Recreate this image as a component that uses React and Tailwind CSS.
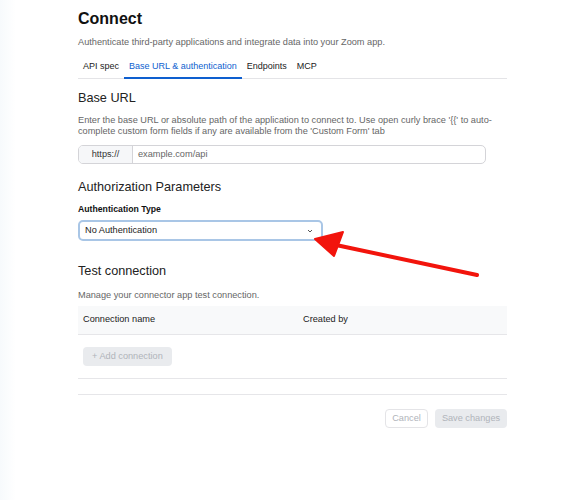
import React from 'react';

const font = { fontFamily: '"Liberation Sans", Arial, sans-serif' };

function Tabs() {
  const tabs = ['API spec', 'Base URL & authentication', 'Endpoints', 'MCP'];
  return (
    <div className="flex border-b border-[#e4e4e7] mt-[10px]">
      {tabs.map((t, i) => (
        <div
          key={t}
          className={`px-[5px] pb-[4px] text-[9px] ${i === 1 ? 'text-[#0e5fcf] border-b-2 border-[#0e5fcf] -mb-px' : 'text-[#222]'}`}
        >
          {t}
        </div>
      ))}
    </div>
  );
}

function Arrow() {
  return (
    <svg className="absolute left-0 top-0 pointer-events-none" width="573" height="500">
      <line x1="477" y1="275" x2="336" y2="245" stroke="#f2140c" strokeWidth="4" strokeLinecap="round" />
      <polygon points="315,239 343,232 334,256" fill="#f2140c" stroke="#f2140c" strokeWidth="2" strokeLinejoin="round" />
    </svg>
  );
}

export default function App() {
  return (
    <div className="relative w-[573px] h-[500px] bg-white overflow-hidden" style={font}>
      <div className="absolute left-0 top-0 w-[16px] h-full bg-gradient-to-r from-[#f7fafc] to-white" />
      <div className="ml-[78px] w-[429px] pt-[9px]">
        <h1 className="text-[16px] font-bold text-[#111] leading-[20px]">Connect</h1>
        <p className="text-[9.2px] text-[#666] mt-[7px]">
          Authenticate third-party applications and integrate data into your Zoom app.
        </p>
        <Tabs />

        <h2 className="text-[12.7px] text-[#222] mt-[11px] leading-[16px]">Base URL</h2>
        <div className="text-[9.2px] text-[#666] leading-[11px] mt-[9px] whitespace-nowrap">
          <p>Enter the base URL or absolute path of the application to connect to. Use open curly brace '{'{{'}' to auto-</p>
          <p>complete custom form fields if any are available from the 'Custom Form' tab</p>
        </div>
        <div className="flex w-[408px] h-[19px] mt-[8px] border border-[#d4d4d8] rounded-[5px] overflow-hidden text-[9.2px]">
          <div className="w-[54px] flex items-center justify-center bg-[#f6f7f9] border-r border-[#d4d4d8] text-[#333]">https://</div>
          <div className="flex items-center pl-[5px] text-[#666]">example.com/api</div>
        </div>

        <h2 className="text-[12.7px] text-[#222] mt-[15px] leading-[16px]">Authorization Parameters</h2>
        <div className="text-[8.7px] font-bold text-[#111] mt-[8px]">Authentication Type</div>
        <div className="flex items-center justify-between w-[245px] h-[21px] mt-[4px] border-2 border-[#a9c6e6] rounded-[5px] pl-[5px] pr-[7px] text-[9.2px] text-[#222]">
          <span>No Authentication</span>
          <svg width="8" height="8" viewBox="0 0 8 8">
            <path d="M2 3 L4 5 L6 3" fill="none" stroke="#555" strokeWidth="1" />
          </svg>
        </div>

        <h2 className="text-[12.7px] text-[#222] mt-[22px] leading-[16px]">Test connection</h2>
        <p className="text-[9.2px] text-[#666] mt-[10px]">Manage your connector app test connection.</p>
        <div className="flex items-center h-[29px] mt-[3px] bg-[#f8f9fa] border-b border-[#e6e6e9] text-[9.2px] text-[#222]">
          <div className="w-[225px] pl-[5px]">Connection name</div>
          <div>Created by</div>
        </div>
        <div className="h-[44px] border-b border-[#e6e6e9] flex items-start pt-[12px] pl-[5px]">
          <div className="h-[19px] px-[9px] flex items-center rounded-[4px] bg-[#e9ebee] text-[9.2px] text-[#b0b4ba]">
            + Add connection
          </div>
        </div>
        <div className="h-[16px] border-b border-[#e6e6e9]" />
        <div className="flex justify-end gap-[7px] mt-[14px]">
          <div className="h-[19px] w-[43px] flex items-center justify-center rounded-[4px] border border-[#e4e4e7] text-[9.2px] text-[#b0b4ba]">Cancel</div>
          <div className="h-[19px] w-[72px] flex items-center justify-center rounded-[4px] bg-[#e9ebee] text-[9.2px] text-[#b0b4ba]">Save changes</div>
        </div>
      </div>
      <Arrow />
    </div>
  );
}
